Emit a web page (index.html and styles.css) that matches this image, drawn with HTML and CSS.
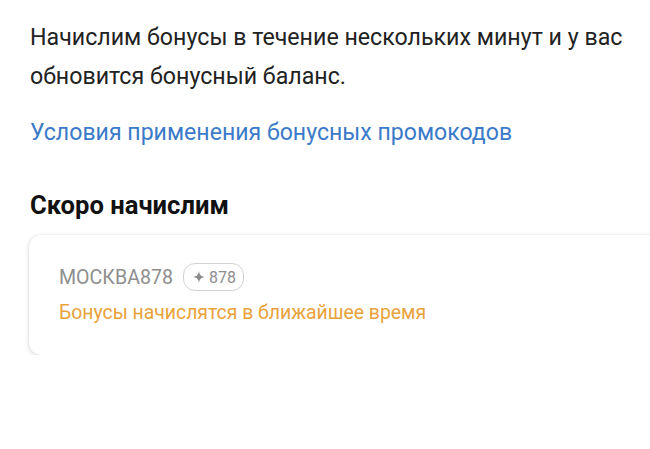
FILE: index.html
```html
<!DOCTYPE html>
<html lang="ru">
<head>
<meta charset="utf-8">
<link rel="stylesheet" href="styles.css">
</head>
<body>
<main class="page">
  <p class="intro">Начислим бонусы в течение нескольких минут и у вас обновится бонусный баланс.</p>
  <a class="link" href="#">Условия применения бонусных промокодов</a>
  <h2 class="title">Скоро начислим</h2>
  <div class="card">
    <div class="code-row">
      <span class="code">МОСКВА878</span>
      <span class="badge">
        <svg class="star" viewBox="0 0 12 12" width="12" height="12"><path d="M6 0 C6.6 4 8 5.4 12 6 C8 6.6 6.6 8 6 12 C5.4 8 4 6.6 0 6 C4 5.4 5.4 4 6 0 Z" fill="#8c8c8c"/></svg>
        <span class="badge-num">878</span>
      </span>
    </div>
    <div class="status">Бонусы начислятся в ближайшее время</div>
  </div>
</main>
</body>
</html>
```

FILE: styles.css
```css
* { box-sizing: border-box; }
html, body { margin: 0; padding: 0; background: #fff; }
body { font-family: Roboto, "Noto Sans", sans-serif; color: #1f1f1f; overflow: hidden; }
.page { padding: 18px 0 0 30px; width: 680px; }
.intro {
  margin: 0;
  width: 600px;
  font-size: 23.2px;
  line-height: 39px;
  color: #222;
}
.link {
  display: block;
  margin-top: 18px;
  font-size: 23.1px;
  line-height: 38px;
  color: #3b7ac8;
  text-decoration: none;
}
.title {
  margin: 37px 0 0 0;
  font-size: 25.6px;
  line-height: 32px;
  font-weight: 700;
  color: #111;
}
.card {
  margin: 14px 0 0 -1px;
  width: 660px;
  height: 120px;
  border-radius: 12px;
  background: #fff;
  box-shadow: 0 1px 4px rgba(0,0,0,0.18), 0 0 1px rgba(0,0,0,0.08);
  padding: 28px 0 0 30px;
}
.code-row { display: flex; align-items: center; gap: 10px; height: 28px; }
.code { font-size: 19.6px; color: #8e8e8e; }
.badge {
  display: inline-flex;
  align-items: center;
  gap: 4px;
  height: 28px;
  padding: 0 7px 0 9px;
  border: 1.5px solid #d2d2d2;
  border-radius: 12px;
}
.star { display: block; }
.badge-num { font-size: 16px; color: #8e8e8e; }
.status {
  margin-top: 10px;
  font-size: 19.4px;
  line-height: 24px;
  color: #e9a23b;
}
```
